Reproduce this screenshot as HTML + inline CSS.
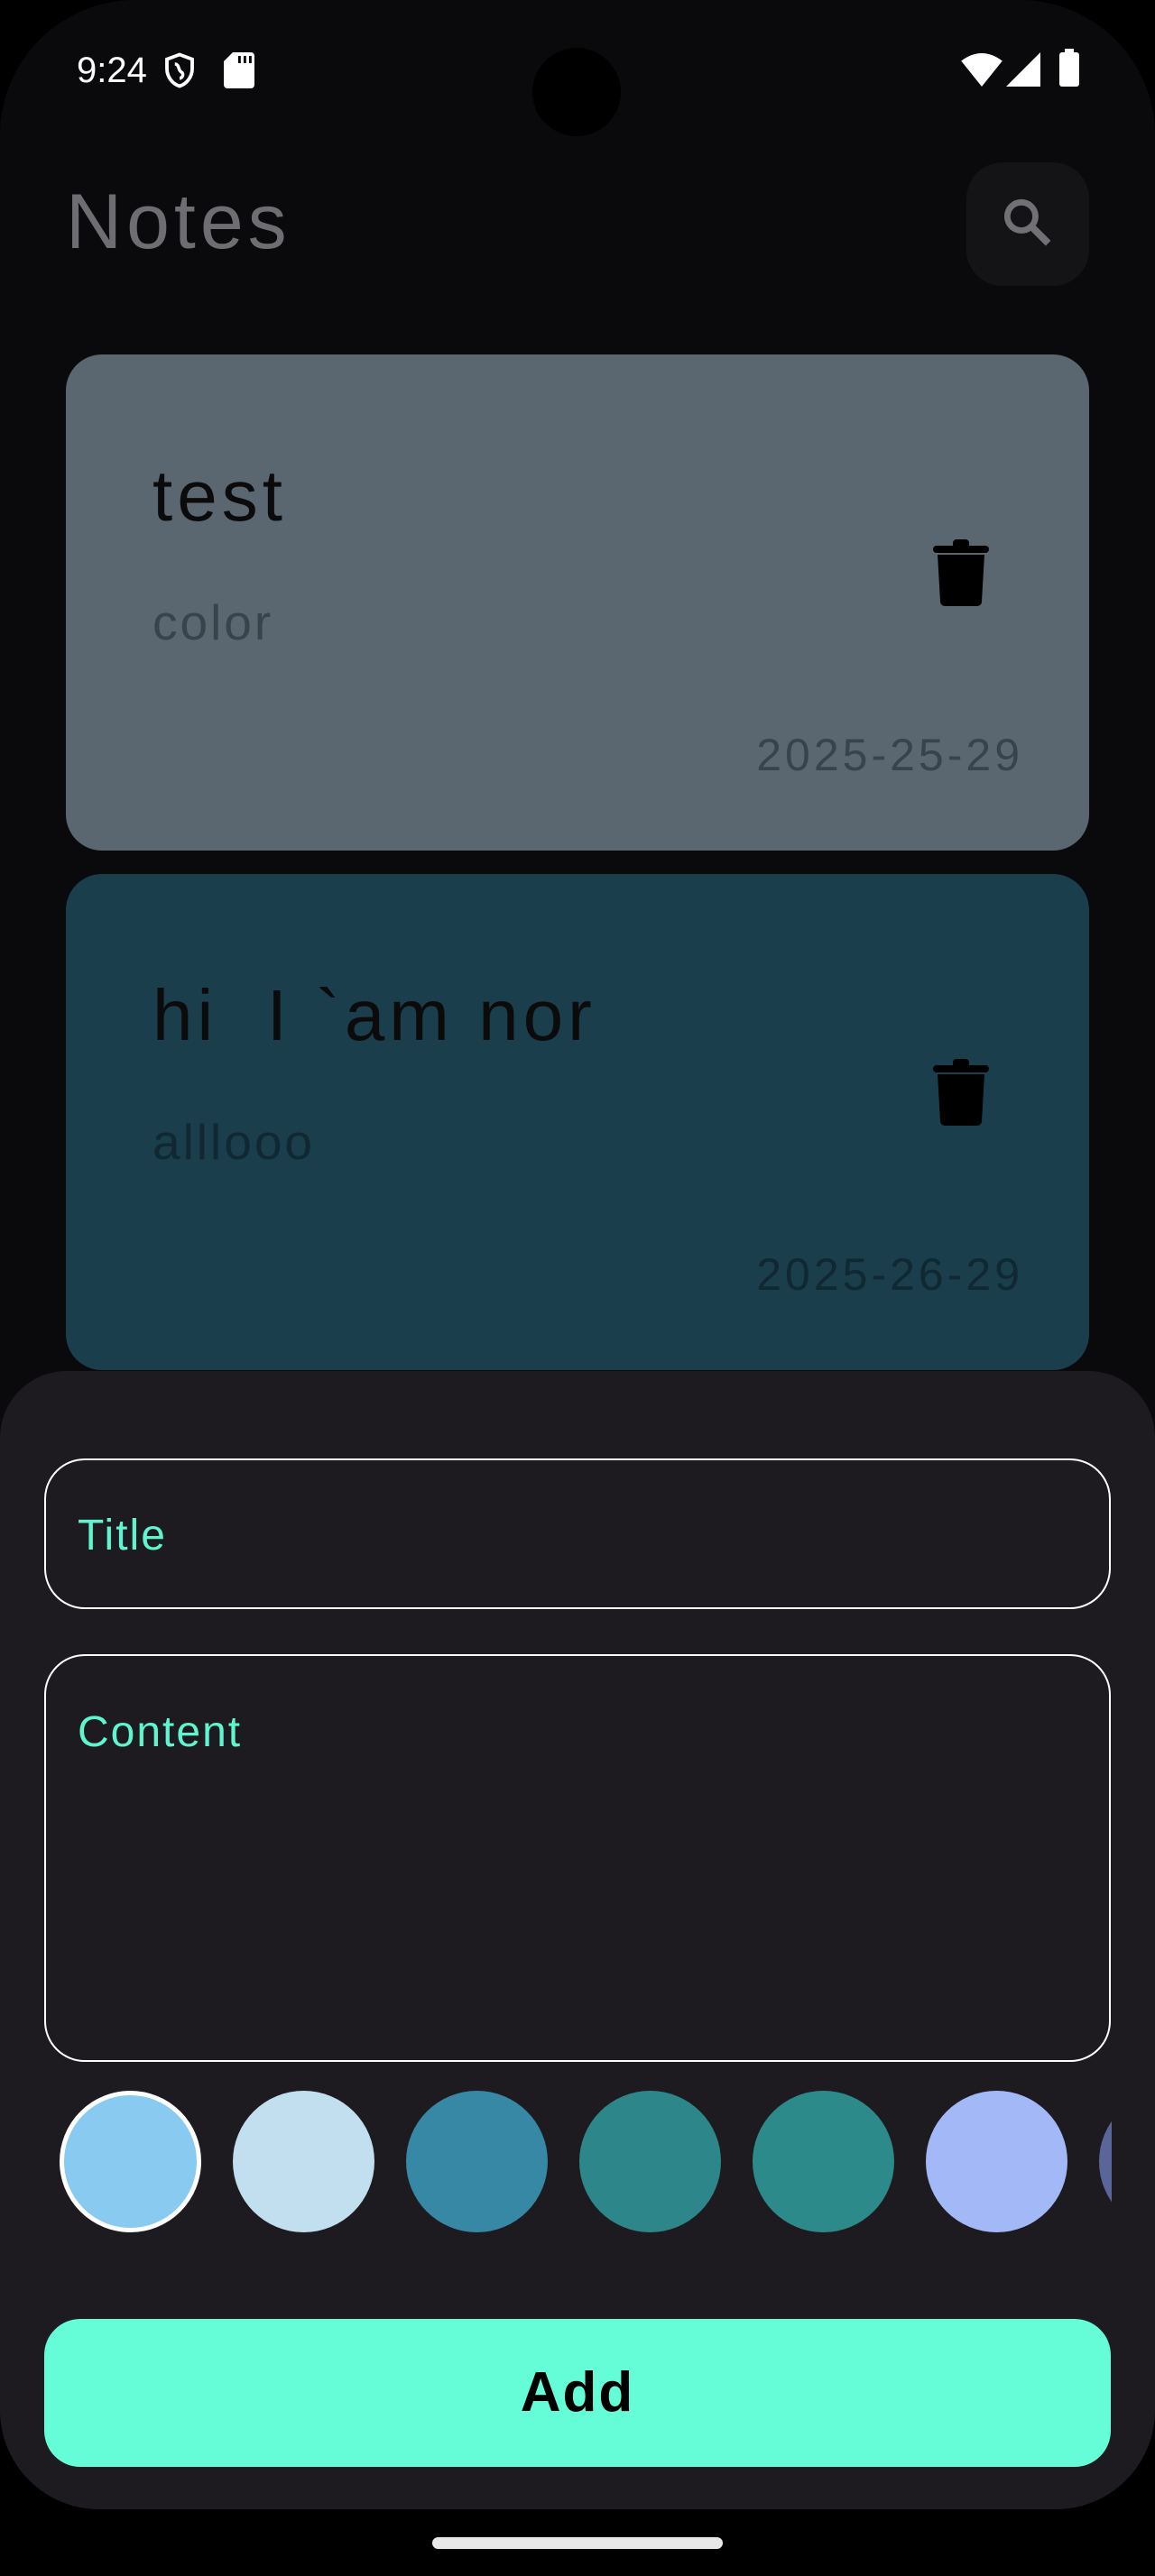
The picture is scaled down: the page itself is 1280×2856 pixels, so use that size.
<!DOCTYPE html>
<html><head><meta charset="utf-8"><style>
*{margin:0;padding:0;box-sizing:border-box}
body{width:1280px;height:2856px;background:#000;font-family:"Liberation Sans",sans-serif;position:relative;overflow:hidden}
.screen{position:absolute;left:0;top:0;width:1280px;height:2782px;background:#0a0a0c;border-radius:150px 150px 110px 110px;overflow:hidden}
.abs{position:absolute}
.card{position:absolute;left:73px;width:1134px;height:550px;border-radius:40px}
.t{position:absolute;left:96px;font-size:80px;letter-spacing:5px;color:#0b0b0b;line-height:1}
.s{position:absolute;left:96px;font-size:55px;letter-spacing:3px;line-height:1}
.d{position:absolute;right:73px;font-size:50px;letter-spacing:4px;line-height:1}
.trash{position:absolute;left:961px;width:62px;height:74px}
.sheet{position:absolute;left:0;top:1520px;width:1280px;height:1262px;background:#1d1b20;border-radius:74px 74px 0 0}
.field{position:absolute;left:49px;width:1182px;border:2.5px solid #fff;border-radius:45px}
.lbl{position:absolute;left:35px;font-size:48px;letter-spacing:2px;color:#5ef5cf;line-height:1}
.c{position:absolute;top:2318px;width:157px;height:157px;border-radius:50%}
</style></head><body>
<div class="screen">
  <div class="abs" style="left:85px;top:56px;font-size:40px;color:#fff">9:24</div>
  <svg class="abs" style="left:178px;top:56px" width="42" height="44" viewBox="0 0 24 24"><path d="M12 2L4 5v6c0 5 3.4 9.6 8 11 4.6-1.4 8-6 8-11V5z" fill="none" stroke="#fff" stroke-width="2.2"/><path d="M9 8c3 0 2 4 4 5s1 4 -1 4" fill="none" stroke="#fff" stroke-width="2"/></svg>
  <svg class="abs" style="left:248px;top:58px" width="34" height="40" viewBox="0 0 17 20"><path d="M5 0h10a2 2 0 0 1 2 2v16a2 2 0 0 1-2 2H2a2 2 0 0 1-2-2V5z" fill="#fff"/><rect x="8" y="2" width="1.4" height="4" fill="#000"/><rect x="11" y="2" width="1.4" height="4" fill="#000"/><rect x="14" y="2" width="1.4" height="4" fill="#000"/></svg>
  <svg class="abs" style="left:1065px;top:58px" width="46" height="38" viewBox="0 0 24 20"><path d="M0 5Q12-4 24 5L12 20z" fill="#fff"/></svg>
  <svg class="abs" style="left:1115px;top:58px" width="38" height="38" viewBox="0 0 20 20"><path d="M20 0V20H0z" fill="#fff"/></svg>
  <div class="abs" style="left:1174px;top:58px;width:22px;height:38px;background:#fff;border-radius:3px"></div>
  <div class="abs" style="left:1180px;top:54px;width:10px;height:6px;background:#fff"></div>
  <div class="abs" style="left:590px;top:53px;width:98px;height:98px;border-radius:50%;background:#000"></div>

  <div class="abs" style="left:73px;top:203px;font-size:86px;letter-spacing:5px;color:#6e6d71;line-height:1">Notes</div>
  <div class="abs" style="left:1071px;top:180px;width:136px;height:137px;border-radius:40px;background:#141416"></div>
  <svg class="abs" style="left:1105px;top:213px" width="68" height="68" viewBox="0 0 24 24"><circle cx="9.5" cy="9.5" r="5.5" fill="none" stroke="#717075" stroke-width="2.4"/><path d="M13.5 13.5L20 20" stroke="#717075" stroke-width="2.8"/></svg>

  <div class="card" style="top:393px;background:#5a6770">
    <div class="t" style="top:117px">test</div>
    <div class="s" style="top:270px;color:#38444b">color</div>
    <div class="d" style="top:419px;color:#38444b">2025-25-29</div>
    <svg class="trash" style="top:205px" viewBox="0 0 62 74"><rect x="0" y="7" width="62" height="8" rx="4"/><rect x="22" y="0" width="18" height="10" rx="4"/><path d="M5 17h52l-3 52a5 5 0 0 1-5 5H13a5 5 0 0 1-5-5z"/></svg>
  </div>
  <div class="card" style="top:969px;background:#1a3e4c">
    <div class="t" style="top:117px">hi&nbsp; I `am nor</div>
    <div class="s" style="top:270px;color:#0f2832">alllooo</div>
    <div class="d" style="top:419px;color:#0f2832">2025-26-29</div>
    <svg class="trash" style="top:205px" viewBox="0 0 62 74"><rect x="0" y="7" width="62" height="8" rx="4"/><rect x="22" y="0" width="18" height="10" rx="4"/><path d="M5 17h52l-3 52a5 5 0 0 1-5 5H13a5 5 0 0 1-5-5z"/></svg>
  </div>

  <div class="sheet"></div>
  <div class="field" style="top:1617px;height:167px"><div class="lbl" style="top:60px">Title</div></div>
  <div class="field" style="top:1834px;height:452px"><div class="lbl" style="top:61px">Content</div></div>
  <div style="position:absolute;left:0;top:2300px;width:1232px;height:200px;overflow:hidden">
    <div class="c" style="top:18px;left:66px;background:#89cbf0;border:5px solid #fff"></div>
    <div class="c" style="top:18px;left:258px;background:#c2dff0"></div>
    <div class="c" style="top:18px;left:450px;background:#3788a5"></div>
    <div class="c" style="top:18px;left:642px;background:#2d8689"></div>
    <div class="c" style="top:18px;left:834px;background:#2d8a8a"></div>
    <div class="c" style="top:18px;left:1026px;background:#a3b9f7"></div>
    <div class="c" style="top:18px;left:1218px;background:#5a6699"></div>
  </div>
  <div class="abs" style="left:49px;top:2571px;width:1182px;height:164px;border-radius:40px;background:#64fdd7;text-align:center;line-height:164px;font-size:62px;letter-spacing:2px;font-weight:bold;color:#000">Add</div>
</div>
<div class="abs" style="left:479px;top:2813px;width:322px;height:13px;border-radius:7px;background:#e8e8e8"></div>
</body></html>
